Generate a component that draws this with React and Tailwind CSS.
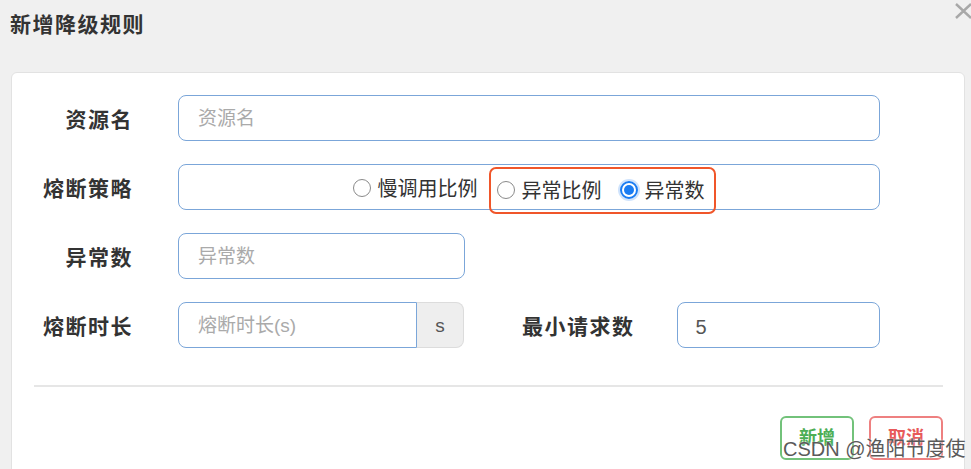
import React from "react";

const font = { fontFamily: '"Liberation Sans", "Noto Sans CJK SC", sans-serif' };

function Radio({ checked, label }) {
  return (
    <label className="flex items-center gap-[7px]">
      {checked ? (
        <span className="w-[18px] h-[18px] rounded-full border-[2px] border-[#1a7cf2] flex items-center justify-center shadow-[0_0_0_2px_#cfe3fc]">
          <span className="w-[10px] h-[10px] rounded-full bg-[#1a7cf2]"></span>
        </span>
      ) : (
        <span className="w-[18px] h-[18px] rounded-full border-[1.5px] border-[#8a8a8a] bg-white"></span>
      )}
      <span className="pt-[2px] text-[20px] text-[#333]">{label}</span>
    </label>
  );
}

function Label({ children, className = "" }) {
  return (
    <div className={"pt-[4px] text-[21px] font-bold text-[#333] tracking-[1.5px] " + className}>
      {children}
    </div>
  );
}

export default function App() {
  return (
    <div
      className="relative w-[971px] h-[469px] bg-[#f0f0f0] overflow-hidden"
      style={font}
    >
      {/* header */}
      <div className="h-[72px] flex items-start justify-between">
        <h3 className="pl-[10px] pt-[9px] text-[21px] font-bold text-[#333] tracking-[1.5px]">
          新增降级规则
        </h3>
        <svg width="24" height="18" viewBox="0 0 24 18" className="mt-[2px] mr-[-6px]">
          <path d="M3 2 L18 16 M18 2 L3 16" stroke="#a8a8a8" strokeWidth="2.4" />
        </svg>
      </div>

      {/* panel */}
      <div className="ml-[11px] w-[954px] h-[420px] bg-white rounded-t-[6px] border border-[#e2e2e2]">
        <div className="pt-[22px] flex flex-col gap-[23px]">
          {/* 资源名 */}
          <div className="flex items-center h-[46px]">
            <Label className="w-[121px] text-right">资源名</Label>
            <div className="ml-[45px] w-[702px] h-[46px] rounded-[8px] border border-[#7ba6d9] flex items-center px-[19px] pt-[3px] text-[19px] text-[#aaa]">
              资源名
            </div>
          </div>

          {/* 熔断策略 */}
          <div className="flex items-center h-[46px]">
            <Label className="w-[121px] text-right">熔断策略</Label>
            <div className="ml-[45px] w-[702px] h-[46px] rounded-[8px] border border-[#7ba6d9] flex items-center justify-center">
              <div className="flex items-center pl-[10px] pt-[2px]">
                <Radio label="慢调用比例" />
                <div className="ml-[11px] mt-[4px] h-[47px] flex items-center gap-[18px] pl-[6px] pr-[9px] border-[2.5px] border-[#f0562a] rounded-[7px]">
                  <Radio label="异常比例" />
                  <Radio checked label="异常数" />
                </div>
              </div>
            </div>
          </div>

          {/* 异常数 */}
          <div className="flex items-center h-[46px]">
            <Label className="w-[121px] text-right">异常数</Label>
            <div className="ml-[45px] w-[287px] h-[46px] rounded-[8px] border border-[#7ba6d9] flex items-center px-[19px] pt-[3px] text-[19px] text-[#aaa]">
              异常数
            </div>
          </div>

          {/* 熔断时长 / 最小请求数 */}
          <div className="flex items-center h-[46px]">
            <Label className="w-[121px] text-right">熔断时长</Label>
            <div className="ml-[45px] flex h-[46px]">
              <div className="w-[239px] h-[46px] rounded-l-[8px] border border-[#7ba6d9] flex items-center px-[19px] pt-[3px] text-[19px] text-[#aaa]">
                熔断时长(s)
              </div>
              <div className="w-[47px] h-[46px] rounded-r-[8px] border border-l-0 border-[#dcdcdc] bg-[#eeeeee] flex items-center justify-center pt-[2px] text-[19px] text-[#555]">
                s
              </div>
            </div>
            <Label className="ml-[58px]">最小请求数</Label>
            <div className="ml-[42px] w-[203px] h-[46px] rounded-[8px] border border-[#7ba6d9] flex items-center px-[18px] pt-[3px] text-[20px] text-[#555]">
              5
            </div>
          </div>
        </div>

        <div className="mt-[37px] ml-[22px] mr-[21px] h-[2px] bg-[#e6e6e6]"></div>

        <div className="mt-[29px] mr-[21px] flex justify-end gap-[15px]">
          <button className="w-[74px] h-[44px] rounded-[6px] border-[2px] border-[#72c27a] text-[18px] font-bold text-[#4cae55] bg-white">
            新增
          </button>
          <button className="w-[74px] h-[44px] rounded-[6px] border-[2px] border-[#ee8080] text-[18px] font-bold text-[#e85a5a] bg-white">
            取消
          </button>
        </div>
      </div>

      {/* watermark */}
      <div className="absolute left-[783px] top-[434px] text-[20px] text-[#5a5a5a] [text-shadow:0_0_2px_#fff]">
        CSDN @渔阳节度使
      </div>
    </div>
  );
}
